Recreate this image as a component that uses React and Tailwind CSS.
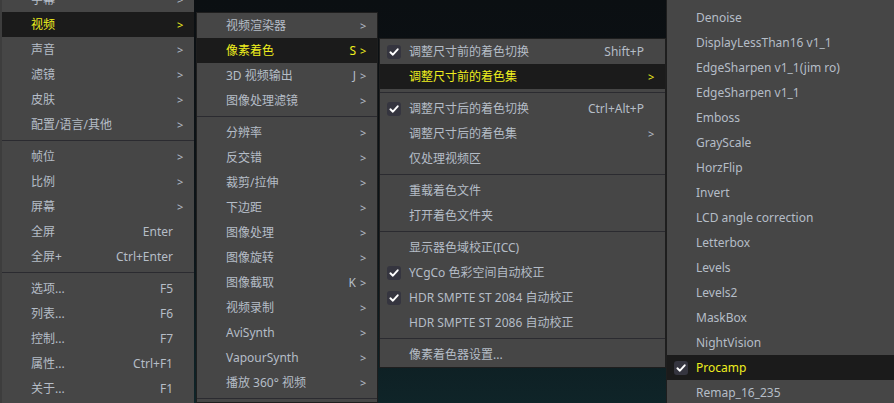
import React from "react";

const FONT = "font-['Noto_Sans','Noto_Sans_CJK_SC',sans-serif]";

function Check() {
  return (
    <span className="w-[14px] h-[14px] rounded-[3px] bg-[#35353f] flex items-center justify-center">
      <svg width="10" height="10" viewBox="0 0 10 10">
        <path d="M1.4 5.3 L3.9 7.7 L8.7 2.3" stroke="#ffffff" strokeWidth="1.9" fill="none" strokeLinecap="round" strokeLinejoin="round" />
      </svg>
    </span>
  );
}

function Menu({ className, items }) {
  return (
    <div className={`absolute flex flex-col bg-[#464646] ${className}`}>
      {items.map((it, i) =>
        it === "sep" ? (
          <div key={i} className="h-[7px] pt-[3px]">
            <div className="h-px bg-[#2b2b30]" />
          </div>
        ) : (
          <div
            key={i}
            className={`flex items-center h-[25px] pl-[7px] whitespace-nowrap ${
              it.hl ? "bg-[#1b1b1b] text-[#eeee1e]" : "text-[#b5bdc7]"
            }`}
          >
            <span className="w-[14px] h-[14px] mr-[8px] flex">{it.check && <Check />}</span>
            <span className="flex-1">{it.label}</span>
            {it.sc && <span>{it.sc}</span>}
            <span className="w-[21px] pl-[4px] text-[11px] leading-none">{it.arrow ? ">" : ""}</span>
          </div>
        )
      )}
    </div>
  );
}

const menu1 = [
  { label: "字幕", arrow: true },
  { label: "视频", arrow: true, hl: true },
  { label: "声音", arrow: true },
  { label: "滤镜", arrow: true },
  { label: "皮肤", arrow: true },
  { label: "配置/语言/其他", arrow: true },
  "sep",
  { label: "帧位", arrow: true },
  { label: "比例", arrow: true },
  { label: "屏幕", arrow: true },
  { label: "全屏", sc: "Enter" },
  { label: "全屏+", sc: "Ctrl+Enter" },
  "sep",
  { label: "选项...", sc: "F5" },
  { label: "列表...", sc: "F6" },
  { label: "控制...", sc: "F7" },
  { label: "属性...", sc: "Ctrl+F1" },
  { label: "关于...", sc: "F1" },
  "sep",
];

const menu2 = [
  { label: "视频渲染器", arrow: true },
  { label: "像素着色", sc: "S", arrow: true, hl: true },
  { label: "3D 视频输出", sc: "J", arrow: true },
  { label: "图像处理滤镜", arrow: true },
  "sep",
  { label: "分辨率", arrow: true },
  { label: "反交错", arrow: true },
  { label: "裁剪/拉伸", arrow: true },
  { label: "下边距", arrow: true },
  { label: "图像处理", arrow: true },
  { label: "图像旋转", arrow: true },
  { label: "图像截取", sc: "K", arrow: true },
  { label: "视频录制", arrow: true },
  { label: "AviSynth", arrow: true },
  { label: "VapourSynth", arrow: true },
  { label: "播放 360° 视频", arrow: true },
  "sep",
];

const menu3 = [
  { label: "调整尺寸前的着色切换", sc: "Shift+P", check: true },
  { label: "调整尺寸前的着色集", arrow: true, hl: true },
  "sep",
  { label: "调整尺寸后的着色切换", sc: "Ctrl+Alt+P", check: true },
  { label: "调整尺寸后的着色集", arrow: true },
  { label: "仅处理视频区" },
  "sep",
  { label: "重载着色文件" },
  { label: "打开着色文件夹" },
  "sep",
  { label: "显示器色域校正(ICC)" },
  { label: "YCgCo 色彩空间自动校正", check: true },
  { label: "HDR SMPTE ST 2084 自动校正", check: true },
  { label: "HDR SMPTE ST 2086 自动校正" },
  "sep",
  { label: "像素着色器设置..." },
];

const menu4 = [
  { label: "Denoise" },
  { label: "DisplayLessThan16 v1_1" },
  { label: "EdgeSharpen v1_1(jim ro)" },
  { label: "EdgeSharpen v1_1" },
  { label: "Emboss" },
  { label: "GrayScale" },
  { label: "HorzFlip" },
  { label: "Invert" },
  { label: "LCD angle correction" },
  { label: "Letterbox" },
  { label: "Levels" },
  { label: "Levels2" },
  { label: "MaskBox" },
  { label: "NightVision" },
  { label: "Procamp", check: true, hl: true },
  { label: "Remap_16_235" },
];

export default function App() {
  return (
    <div
      className={`relative w-[894px] h-[403px] overflow-hidden text-[12px] ${FONT} bg-[linear-gradient(180deg,#0b0f12_0%,#0c1418_60%,#0f2428_100%)]`}
    >
      <Menu className="left-0 top-[-13px] w-[194px] border-l-2 border-[#3d3d3d]" items={menu1} />
      <Menu className="left-[196px] top-[12px] w-[182px] border border-[#1e1e1e]" items={menu2} />
      <Menu className="left-[379px] top-[38px] w-[287px] border border-[#1e1e1e]" items={menu3} />
      <Menu className="left-[666px] top-0 pt-[5px] w-[260px] border-l border-[#1e1e1e]" items={menu4} />
    </div>
  );
}
